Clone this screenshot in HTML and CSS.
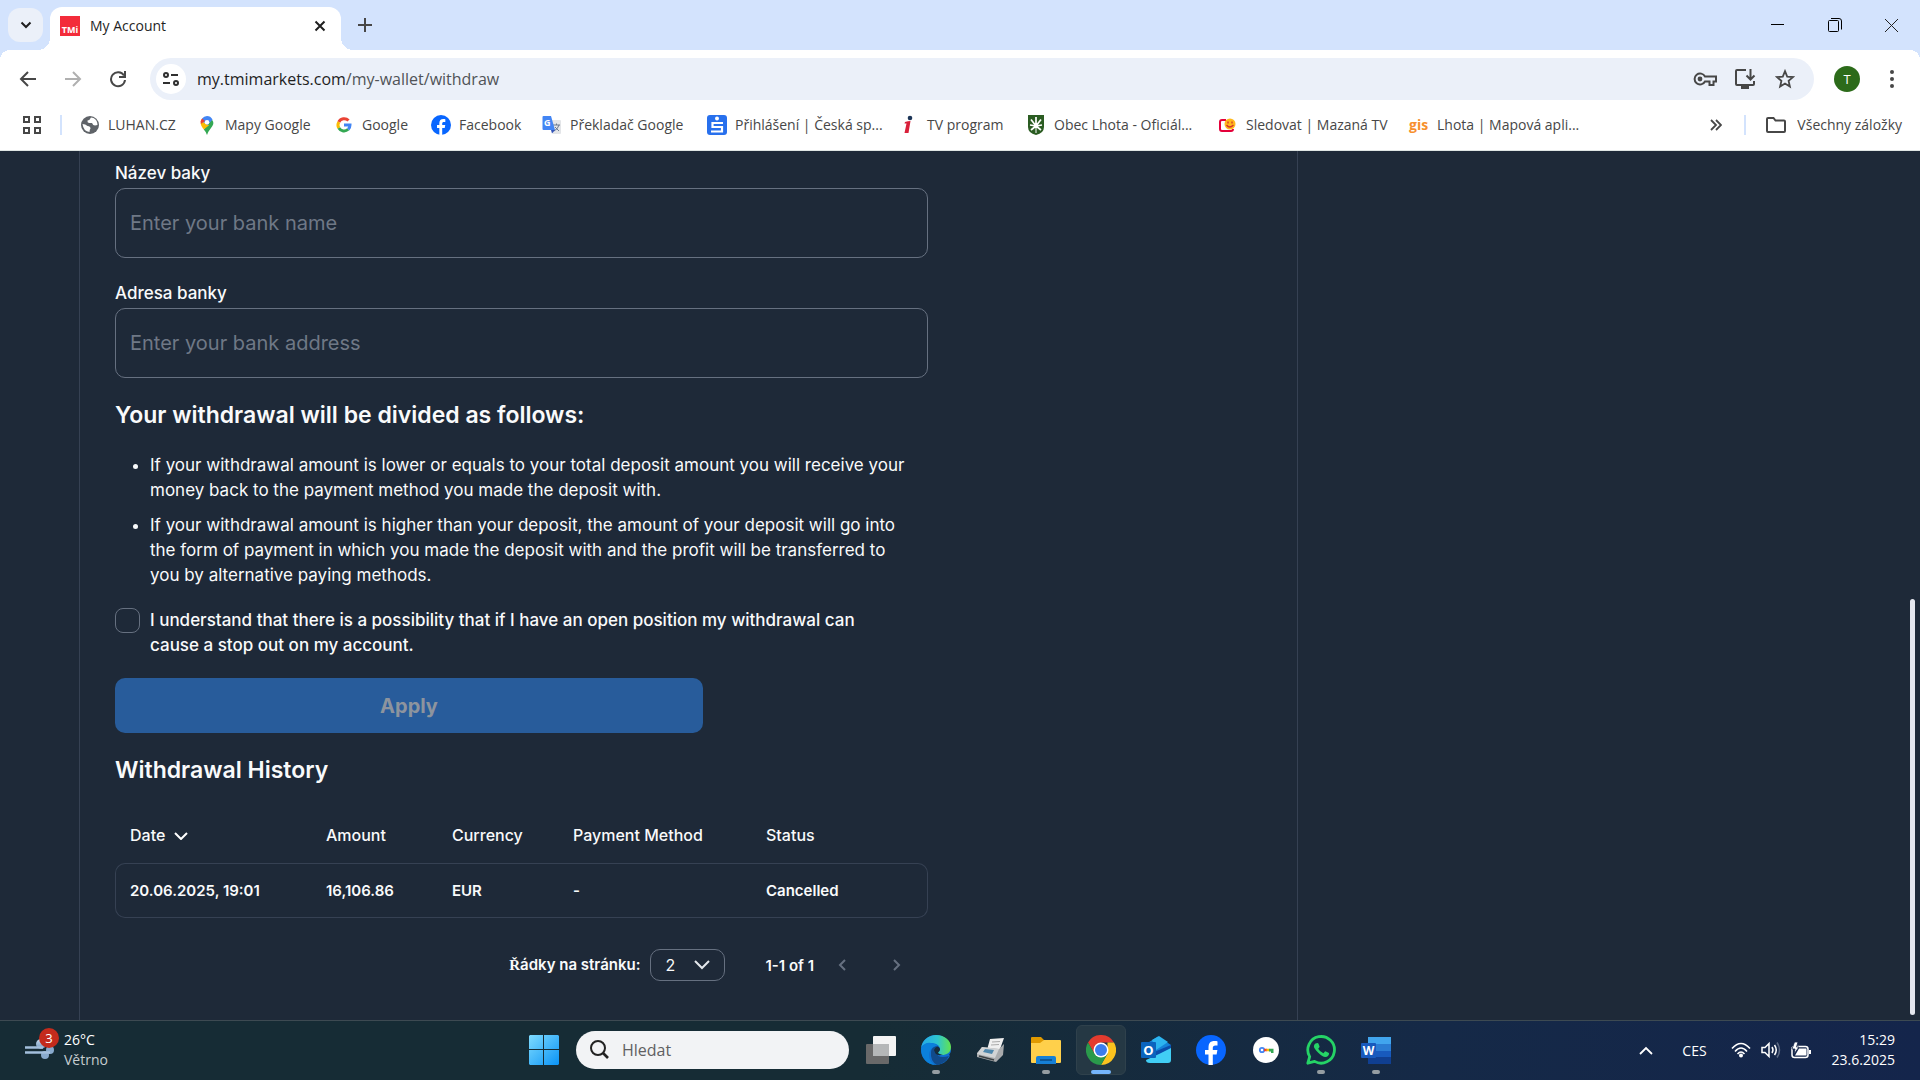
FILE: index.html
```html
<!DOCTYPE html>
<html lang="cs">
<head>
  <meta charset="UTF-8">
  <meta name="viewport" content="width=device-width, initial-scale=1.0">
  <title>My Account</title>
  <link rel="stylesheet" href="styles.css">
</head>
<body>

  <!-- Tab strip -->
  <header class="tab-strip">
    <button class="tab-search" aria-label="Hledat karty">
      <svg width="12" height="12" viewBox="0 0 12 12"><path d="M1.500 3.500L6 8l4.500-4.500" fill="none" stroke="#1f1f1f" stroke-width="2"/></svg>
    </button>
    <div class="tab">
      <span class="tab-icon">TMi</span>
      <span class="tab-title">My Account</span>
      <button class="tab-close" aria-label="Zavřít kartu">
        <svg width="12" height="12" viewBox="0 0 12 12"><path d="M1.500 1.500l9 9M10.500 1.500l-9 9" stroke="#1f1f1f" stroke-width="2"/></svg>
      </button>
    </div>
    <button class="new-tab" aria-label="Nová karta">
      <svg width="14" height="14" viewBox="0 0 14 14"><path d="M7 0v14M0 7h14" stroke="#474747" stroke-width="2"/></svg>
    </button>
    <div class="window-controls">
      <button aria-label="Minimalizovat"><svg width="13" height="13" viewBox="0 0 13 13"><path d="M0 5.500h13" stroke="#000"/></svg></button>
      <button aria-label="Obnovit"><svg width="14" height="14" viewBox="0 0 14 14"><g fill="none" stroke="#000"><rect x=".5" y="2.500" width="10" height="11" rx="1"/><path d="M3 .5h8q2.500 0 2.500 2.500v8.500"/></g></svg></button>
      <button aria-label="Zavřít"><svg width="13" height="13" viewBox="0 0 13 13"><path d="M0 0l13 13M13 0L0 13" stroke="#222"/></svg></button>
    </div>
  </header>

  <!-- Address bar -->
  <div class="toolbar">
    <button class="tool-button" aria-label="Zpět">
      <svg width="18" height="18" viewBox="0 0 18 18"><path d="M17 9H2M9 2L2 9l7 7" fill="none" stroke="#474747" stroke-width="2"/></svg>
    </button>
    <button class="tool-button" aria-label="Vpřed" disabled>
      <svg width="18" height="18" viewBox="0 0 18 18"><path d="M1 9h15M9 2l7 7-7 7" fill="none" stroke="#b0b0b0" stroke-width="2"/></svg>
    </button>
    <button class="tool-button" aria-label="Načíst znovu">
      <svg width="18" height="18" viewBox="0 0 18 18"><path d="M15 5.500A7 7 0 1 0 16 10M16 1v6h-6" fill="none" stroke="#474747" stroke-width="2"/></svg>
    </button>
    <div class="omnibox">
      <button class="site-info" aria-label="Informace o webu">
        <svg width="18" height="16" viewBox="0 0 18 16"><g fill="none" stroke="#303030" stroke-width="2"><circle cx="4" cy="4" r="2"/><path d="M9 4h7M1 12h7"/><circle cx="14" cy="12" r="2"/></g></svg>
      </button>
      <div class="url">my.tmimarkets.com<span class="url-path">/my-wallet/withdraw</span></div>
      <button class="omni-action" aria-label="Hesla">
        <svg width="24" height="16" viewBox="0 0 24 16"><path d="M12 5.500A5.500 5.500 0 1 0 12 10.500h4.500v3.500h4v-3.500H23v-5z" fill="none" stroke="#474747" stroke-width="2"/><circle cx="7" cy="8" r="2.400" fill="#474747"/></svg>
      </button>
      <button class="omni-action" aria-label="Nainstalovat">
        <svg width="22" height="22" viewBox="0 0 22 22"><path d="M12 2H3q-1 0-1 1v13q0 1 1 1h16q1 0 1-1v-3" fill="none" stroke="#474747" stroke-width="2"/><path d="M16.500 1v10M12.500 7.500l4 4 4-4" fill="none" stroke="#474747" stroke-width="2"/><path d="M7 17h8v4H7z" fill="#474747"/></svg>
      </button>
      <button class="omni-action" aria-label="Přidat záložku">
        <svg width="20" height="20" viewBox="0 0 20 20"><path d="M10 2.200l2.200 5.400 5.800.5-4.400 3.800 1.300 5.700-4.900-3-4.900 3 1.300-5.700L2 8.100l5.800-.5z" fill="none" stroke="#474747" stroke-width="1.800"/></svg>
      </button>
    </div>
    <button class="profile" aria-label="Profil">T</button>
    <button class="menu" aria-label="Nabídka">
      <svg width="4" height="18" viewBox="0 0 4 18"><g fill="#474747"><circle cx="2" cy="2" r="2"/><circle cx="2" cy="9" r="2"/><circle cx="2" cy="16" r="2"/></g></svg>
    </button>
  </div>

  <!-- Bookmarks -->
  <nav class="bookmarks">
    <button class="apps" aria-label="Aplikace">
      <svg width="18" height="18" viewBox="0 0 18 18"><path d="M1 1h5v5H1zM12 1h5v5h-5zM1 12h5v5H1zM12 12h5v5h-5z" fill="none" stroke="#474747" stroke-width="2"/></svg>
    </button>
    <span class="divider"></span>
    <div class="bookmark-list">
      <a href="#" class="bookmark">
        <svg width="20" height="20" viewBox="0 0 20 20"><circle cx="10" cy="10" r="9" fill="#5f6368"/><path d="M11 2.500q-1 2.500-3.500 3-.5 2 1.500 2.500h3q1 2.500 3 2.500l2.500-.5q0-5-4-7zM2.500 9q3 0 5 2 3 0 3 2.500-1 1-1 3.500-6-.5-7-8z" fill="#fff"/></svg>
        <span>LUHAN.CZ</span>
      </a>
      <a href="#" class="bookmark">
        <svg width="20" height="20" viewBox="0 0 20 20"><path d="M10 20q-.8-3-3.200-5.600L14.800 4.200Q16.800 7 16.300 9q-.6 2.200-3 5Q10.800 17 10 20z" fill="#34a853"/><path d="M6.800 14.400Q3.500 10.500 3.600 7.500L8 7l4 3.300z" fill="#fbbc04"/><path d="M3.600 7.500q0-2 1.500-4L9 6.500z" fill="#ea4335"/><path d="M5.100 3.500Q7 1 10 1q3.500 0 5.500 3.400L10.500 10 6 7z" fill="#4285f4"/><path d="M5.100 3.500L8 6 3.900 9q-.8-3 1.200-5.500z" fill="#ea4335"/><circle cx="10" cy="7.300" r="2.300" fill="#fff"/></svg>
        <span>Mapy Google</span>
      </a>
      <a href="#" class="bookmark">
        <svg width="20" height="20" viewBox="0 0 20 20"><g fill="none" stroke-width="3"><path d="M14.500 5.500A6 6 0 0 0 4.800 7" stroke="#ea4335"/><path d="M4.800 7a6 6 0 0 0 0 6" stroke="#fbbc04"/><path d="M4.800 13a6 6 0 0 0 9.400 1.300" stroke="#34a853"/><path d="M10 10h6q0 2.600-1.800 4.400" stroke="#4285f4"/></g></svg>
        <span>Google</span>
      </a>
      <a href="#" class="bookmark">
        <svg width="20" height="20" viewBox="0 0 30 30"><circle cx="15" cy="15" r="15" fill="#0866ff"/><path d="M12.500 30V19.500H9V15h3.500v-2.500c0-4.500 2-6.500 6-6.500 1.500 0 2.500.2 3 .4v4h-2c-2 0-2.700.8-2.700 2.600v2h4.600l-.8 4.500h-3.800V30z" fill="#fff"/></svg>
        <span>Facebook</span>
      </a>
      <a href="#" class="bookmark">
        <svg width="20" height="20" viewBox="0 0 20 20"><path d="M8 5h10q1 0 1 1v12q0 1-1 1h-7z" fill="#e3e5e8"/><path d="M11 10h7M14.500 8.500V10M12 16q4-2 5-6M13 12l4 4" fill="none" stroke="#6b7a90"/><path d="M1.500 1H9l4 14H1.500q-1 0-1-1V2q0-1 1-1z" fill="#4285f4"/><path d="M9 15h4l-3 3.500z" fill="#3254b8"/><text x="2" y="11" class="glyph" font-size="9" fill="#fff">G</text></svg>
        <span>Překladač Google</span>
      </a>
      <a href="#" class="bookmark">
        <svg width="20" height="20" viewBox="0 0 20 20"><rect width="20" height="20" rx="3" fill="#2870ed"/><circle cx="10" cy="3.500" r="2" fill="#fff"/><path d="M16 8H5.500v4H15v4.500H4" fill="none" stroke="#fff" stroke-width="2.200"/></svg>
        <span>Přihlášení | Česká sp...</span>
      </a>
      <a href="#" class="bookmark">
        <svg width="20" height="20" viewBox="0 0 20 20"><circle cx="11" cy="3" r="2.300" fill="#1c3557"/><path d="M6 7q3-1 5.500-1L9.500 18H5.500L7.500 8.500H5.500z" fill="#d9203a"/></svg>
        <span>TV program</span>
      </a>
      <a href="#" class="bookmark">
        <svg width="20" height="20" viewBox="0 0 20 20"><path d="M2 0h16v12q0 6-8 8-8-2-8-8z" fill="#2b5c22"/><path d="M10 11V2M10 11L5 4.500M10 11l5-6.500M10 11L4 10M10 11l6-1M10 11l-5 4M10 11l5 4" stroke="#fff" stroke-width="1.700"/><path d="M10 12v6" stroke="#fff"/></svg>
        <span>Obec Lhota - Oficiál...</span>
      </a>
      <a href="#" class="bookmark">
        <svg width="20" height="20" viewBox="0 0 20 20"><path d="M8 5H4Q2 5 2 7v7q0 2 2 2h9q2 0 2-2" fill="none" stroke="#e4003a" stroke-width="2"/><circle cx="12" cy="9" r="5.500" fill="#ffb81c"/><path d="M8.500 10q3 4 7 0M10 6.500v2M14 6.500v2" fill="none" stroke="#d4342b" stroke-width="1.300"/></svg>
        <span>Sledovat | Mazaná TV</span>
      </a>
      <a href="#" class="bookmark">
        <span class="gis-icon">gis</span>
        <span>Lhota | Mapová apli...</span>
      </a>
    </div>
    <button class="more-bookmarks" aria-label="Další záložky">
      <svg width="12" height="12" viewBox="0 0 12 12"><path d="M1 1l5 5-5 5M6 1l5 5-5 5" fill="none" stroke="#474747" stroke-width="1.800"/></svg>
    </button>
    <span class="divider"></span>
    <a href="#" class="bookmark all-bookmarks">
      <svg width="20" height="16" viewBox="0 0 20 16"><path d="M2 1h5.500l2 2.500H18q1 0 1 1V14q0 1-1 1H2q-1 0-1-1V2q0-1 1-1z" fill="none" stroke="#474747" stroke-width="2"/></svg>
      <span>Všechny záložky</span>
    </a>
  </nav>

  <!-- Withdraw page -->
  <main class="page">
    <section class="panel">
      <form class="withdraw-form">
        <div class="field">
          <label for="bank-name">Název baky</label>
          <input type="text" id="bank-name" placeholder="Enter your bank name">
        </div>
        <div class="field">
          <label for="bank-address">Adresa banky</label>
          <input type="text" id="bank-address" placeholder="Enter your bank address">
        </div>

        <h2>Your withdrawal will be divided as follows:</h2>
        <ul class="rules">
          <li>If your withdrawal amount is lower or equals to your total deposit amount you will receive your money back to the payment method you made the deposit with.</li>
          <li>If your withdrawal amount is higher than your deposit, the amount of your deposit will go into the form of payment in which you made the deposit with and the profit will be transferred to you by alternative paying methods.</li>
        </ul>

        <div class="consent">
          <input type="checkbox" id="consent">
          <label for="consent">I understand that there is a possibility that if I have an open position my withdrawal can cause a stop out on my account.</label>
        </div>
        <button type="submit" class="apply" disabled>Apply</button>

        <h2>Withdrawal History</h2>
        <table class="history">
          <thead>
            <tr>
              <th class="col-date">Date
                <svg width="14" height="8" viewBox="0 0 14 8"><path d="M1 1l6 6 6-6" fill="none" stroke="#fff" stroke-width="2"/></svg>
              </th>
              <th class="col-amount">Amount</th>
              <th class="col-currency">Currency</th>
              <th class="col-method">Payment Method</th>
              <th>Status</th>
            </tr>
          </thead>
          <tbody>
            <tr>
              <td>20.06.2025, 19:01</td>
              <td>16,106.86</td>
              <td>EUR</td>
              <td>-</td>
              <td>Cancelled</td>
            </tr>
          </tbody>
        </table>

        <div class="pagination">
          <label for="rows"><span class="serif">Ř</span>ádky na stránku:</label>
          <div class="select-wrap">
            <select id="rows">
              <option>2</option>
              <option>5</option>
              <option>10</option>
            </select>
            <svg width="16" height="10" viewBox="0 0 16 10"><path d="M1 1l7 7 7-7" fill="none" stroke="#e4e7ec" stroke-width="2"/></svg>
          </div>
          <span class="range">1-1 of 1</span>
          <button type="button" class="pager" aria-label="Předchozí" disabled>
            <svg width="8" height="12" viewBox="0 0 8 12"><path d="M7 1L2 6l5 5" fill="none" stroke="#667080" stroke-width="2"/></svg>
          </button>
          <button type="button" class="pager" aria-label="Další" disabled>
            <svg width="8" height="12" viewBox="0 0 8 12"><path d="M1 1l5 5-5 5" fill="none" stroke="#667080" stroke-width="2"/></svg>
          </button>
        </div>
      </form>
    </section>
    <div class="scroll-track"><div class="scroll-thumb"></div></div>
  </main>

  <!-- Taskbar -->
  <footer class="taskbar">
    <button class="weather">
      <span class="weather-icon">
        <svg width="30" height="30" viewBox="0 0 30 30"><defs><linearGradient id="wind" x1="0" y1="0" x2="0" y2="1"><stop offset="0" stop-color="#c9dcf0"/><stop offset="1" stop-color="#6f97bd"/></linearGradient></defs><circle cx="16" cy="9" r="5" fill="url(#wind)"/><circle cx="25" cy="15" r="4" fill="#88aacd"/><circle cx="20" cy="20" r="4" fill="#88aacd"/><path d="M0 12.500h18M0 17.500h25" stroke="#a3bfdc" stroke-width="2.500"/></svg>
        <span class="badge">3</span>
      </span>
      <span class="weather-text">26°C<span class="weather-state">Větrno</span></span>
    </button>

    <div class="task-center">
      <button class="task-button" aria-label="Start">
        <svg width="30" height="30" viewBox="0 0 30 30"><defs><linearGradient id="win" x1="0" y1="0" x2="1" y2="1"><stop offset="0" stop-color="#7fdcff"/><stop offset="1" stop-color="#0a93f5"/></linearGradient></defs><path d="M1 0h13v14H0V1zM15 0h14l1 1v13H15zM0 15h14v15H1l-1-1zM15 15h15v14l-1 1H15z" fill="url(#win)"/></svg>
      </button>
      <div class="search">
        <svg width="20" height="20" viewBox="0 0 20 20"><circle cx="8" cy="8" r="7" fill="none" stroke="#222" stroke-width="2"/><path d="M13 13l5 5" stroke="#222" stroke-width="2.600"/></svg>
        <input type="text" placeholder="Hledat" aria-label="Hledat">
      </div>
      <button class="task-button" aria-label="Zobrazení úloh">
        <svg width="30" height="28" viewBox="0 0 30 28"><rect y="8" width="23" height="20" rx="1" fill="#696969"/><rect x="7" width="23" height="20" rx="1" fill="#f4f4f4"/><path d="M7 8h16v12H7z" fill="#b5b7b8"/></svg>
      </button>
      <button class="task-button running" aria-label="Edge">
        <svg width="30" height="30" viewBox="0 0 30 30"><defs><linearGradient id="edge-top" x1="0" y1="0" x2="1" y2="0"><stop offset="0" stop-color="#25a8ea"/><stop offset=".55" stop-color="#2ec5cf"/><stop offset="1" stop-color="#62e34e"/></linearGradient></defs><circle cx="15" cy="15" r="15" fill="#0f6fd0"/><path d="M28 20l4-6v9z" fill="#152b38"/><path d="M0 13C1 5 8 0 15 0c9 0 15 6 15 12 0 6-5 8-9 8-3 0-4-1-4-2 0-1 2-1 2-4 0-4-5-6-9-6-5 0-9 2-10 5z" fill="url(#edge-top)"/><path d="M10 17c0-3 2-5 5-6l3 1q1 2 0 4l-2 2c0 4 5 5 12 3q-4 8-12 9Q9 26 10 17z" fill="#114a8b"/><path d="M0 13q4-6 10-5 4 0 6 3c-5 0-8 5-8 9 0 5 3 9 7 10C6 30 0 23 0 13z" fill="#0b80dc"/><path d="M13 15q1-3 3.500-3.500 3 1.500 2.500 3.500-1.500 2-2 2.500 1 2 5 2-5 2-7.500-1z" fill="#172c3b"/></svg>
      </button>
      <button class="task-button" aria-label="Tiskárna">
        <svg width="30" height="26" viewBox="0 0 30 26"><path d="M14 2l14-1-5 14-12-2z" fill="#f0f0f0"/><path d="M6 10l17 2 5-5-1 11-7 7L1 20v-4z" fill="#a9abad"/><path d="M6 10l17 2-4 9-18-4z" fill="#d2d4d5"/><path d="M9 12l9 1-2 4-9-2z" fill="#4f87ac"/><path d="M3 19l15 4" stroke="#3c4144" stroke-width="1.500"/><path d="M16 5l8-.5M15 8l8-.5" stroke="#aaa"/></svg>
      </button>
      <button class="task-button running" aria-label="Průzkumník">
        <svg width="30" height="27" viewBox="0 0 30 27"><path d="M0 1q0-1 1-1h9l3 3h10v8H0z" fill="#e09a00"/><path d="M0 6h9l4-3h16q1 0 1 1v21q0 1-1 1H1q-1 0-1-1z" fill="#ffd04b"/><path d="M5 27v-6q0-2 2-2h16q2 0 2 2v6z" fill="#1680d6"/><path d="M9 23h12" stroke="#0d5798" stroke-width="2"/></svg>
      </button>
      <button class="task-button running active" aria-label="Chrome">
        <svg width="30" height="30" viewBox="0 0 30 30"><path d="M2 7.500A15 15 0 0 1 28 7.500H15L8.500 18.800z" fill="#e33b2e"/><path d="M28 7.500A15 15 0 0 1 15 30l6.500-11.200V7.500z" fill="#fcc31e"/><path d="M2 7.500A15 15 0 0 0 15 30l6.500-11.200h-13z" fill="#2a9a4b"/><circle cx="15" cy="15" r="7.500" fill="#fff"/><circle cx="15" cy="15" r="6" fill="#3b7ded"/></svg>
      </button>
      <button class="task-button" aria-label="Outlook">
        <svg width="30" height="28" viewBox="0 0 30 28"><path d="M5 8L16 1q1-1 2 0l12 8v13H5z" fill="#1482d8"/><path d="M11 4l7-4 9 6-12 8z" fill="#2cb4ef"/><path d="M13 16L30 9v9l-14 5z" fill="#0a4dab"/><path d="M30 12v12q0 3-3 3H9q-4 0-4-3l13-6z" fill="#41cef5"/><rect y="6" width="15" height="16" rx="1" fill="#0a64be"/><text x="7.500" y="19" class="glyph" text-anchor="middle" font-size="13" fill="#fff">O</text></svg>
      </button>
      <button class="task-button" aria-label="Facebook">
        <svg width="30" height="30" viewBox="0 0 30 30"><circle cx="15" cy="15" r="15" fill="#0866ff"/><path d="M12.500 30V19.500H9V15h3.500v-2.500c0-4.500 2-6.500 6-6.500 1.500 0 2.500.2 3 .4v4h-2c-2 0-2.700.8-2.700 2.600v2h4.600l-.8 4.500h-3.800V30z" fill="#fff"/></svg>
      </button>
      <button class="task-button" aria-label="Správce hesel">
        <svg width="26" height="26" viewBox="0 0 26 26"><circle cx="13" cy="13" r="13" fill="#fff"/><circle cx="9" cy="13" r="2.200" fill="none" stroke="#4285f4" stroke-width="1.800"/><path d="M11 13h3" stroke="#ea4335" stroke-width="2.500"/><path d="M13.500 13h3" stroke="#fbbc04" stroke-width="2.500"/><path d="M16 11.700h4.500V16H18v-1.500h-2z" fill="#34a853"/></svg>
      </button>
      <button class="task-button running" aria-label="WhatsApp">
        <svg width="30" height="30" viewBox="0 0 30 30"><path d="M1.800 28.200l1.900-6.600A13.300 13.300 0 1 1 8.600 26.400z" fill="none" stroke="#25d366" stroke-width="2.800" stroke-linejoin="round"/><path d="M9.500 8.500l2-.6q.8 0 1 .8l1 2.500q.2.600-.3 1.200l-1 1.300q1.800 3.200 5.200 4.600l1.500-1.700q.4-.4 1-.2l2.600 1.300q.7.400.6 1-.5 3-3.600 3.300Q17 22.300 12.500 18 7.500 13 7.900 11q.3-1.700 1.600-2.500z" fill="#25d366"/></svg>
      </button>
      <button class="task-button running" aria-label="Word">
        <svg width="30" height="27" viewBox="0 0 30 27"><path d="M7 0h23v7H7z" fill="#41a5ee"/><path d="M7 7h23v7H7z" fill="#2b7cd3"/><path d="M7 14h23v6H7z" fill="#185abd"/><path d="M7 20h23v7H7z" fill="#103f91"/><rect y="6" width="15" height="15" rx="1" fill="#185abd"/><text x="7.500" y="18" class="glyph" text-anchor="middle" font-size="12" fill="#fff">W</text></svg>
      </button>
    </div>

    <div class="tray">
      <button class="tray-more" aria-label="Skryté ikony">
        <svg width="14" height="9" viewBox="0 0 14 9"><path d="M1 8l6-6 6 6" fill="none" stroke="#fff" stroke-width="1.800"/></svg>
      </button>
      <button class="language">CES</button>
      <button class="status-icons" aria-label="Síť, zvuk a baterie">
        <svg width="20" height="16" viewBox="0 0 20 16"><path d="M1 6.500q9-10 18 0M4 9.500q6-7 12 0M6.500 12q3.500-4 7 0" fill="none" stroke="#fff" stroke-width="1.600"/><circle cx="10" cy="13.500" r="2" fill="#fff"/></svg>
        <svg width="20" height="18" viewBox="0 0 20 18"><g fill="none" stroke="#fff" stroke-width="1.500"><path d="M1 6.500h3l4-4v13l-4-4H1zM11 6q2 3 0 6M13.500 4q3.500 5 0 10"/><path d="M16 1.500q5 7.500 0 15" stroke="#5a6883"/></g></svg>
        <svg width="20" height="17" viewBox="0 0 20 17"><rect x="1" y="4.500" width="16" height="11" rx="2.500" fill="none" stroke="#fff" stroke-width="1.500"/><path d="M4 13.500l4-7h7.500v7zM18 8h2v4h-2z" fill="#fff"/><path d="M3.500 0L1 7h3l-1 5 5-7H5.500L7 0z" fill="#fff" stroke="#15264a" stroke-width=".8"/></svg>
      </button>
      <button class="clock">15:29<br>23.6.2025</button>
    </div>
  </footer>

</body>
</html>
```

FILE: styles.css
```css
:root {
  --strip: #d3e3fd;
  --omnibox: #ebf0f9;
  --icon: #474747;
  --page-bg: #1e2938;
  --line: #364153;
  --field-line: #667080;
  --text: #f9fafb;
  --muted: #6f7886;
  --primary: #285c9b;
  --ui-font: 'Open Sans', 'Noto Sans', sans-serif;
}

* {
  box-sizing: border-box;
}

body {
  margin: 0;
  height: 100vh;
  display: flex;
  flex-direction: column;
  font-family: var(--ui-font);
  font-size: 14px;
  background-color: var(--page-bg);
  overflow: hidden;
}

button {
  display: flex;
  align-items: center;
  justify-content: center;
  padding: 0;
  border: none;
  background: none;
  font-family: inherit;
  color: inherit;
}

svg {
  display: block;
  flex-shrink: 0;
}

.glyph {
  font-family: var(--ui-font);
  font-weight: 700;
}

/* Tab strip */
.tab-strip {
  display: flex;
  align-items: center;
  height: 50px;
  padding-left: 8px;
  background-color: var(--strip);
  flex-shrink: 0;
}

.tab-search {
  width: 35px;
  height: 34px;
  border-radius: 12px;
  background-color: var(--omnibox);
}

.tab {
  position: relative;
  display: flex;
  align-items: center;
  align-self: flex-end;
  width: 291px;
  height: 43px;
  margin-left: 7px;
  padding: 0 15px 6px 10px;
  gap: 10px;
  background-color: #ffffff;
  border-radius: 12px 12px 0 0;
  color: #1f1f1f;
}

/* outward curves at the foot of the tab */
.tab::before,
.tab::after {
  content: '';
  position: absolute;
  bottom: 0;
  width: 12px;
  height: 12px;
}

.tab::before {
  left: -12px;
  background: radial-gradient(circle at 0 0, transparent 12px, #ffffff 12px);
}

.tab::after {
  right: -12px;
  background: radial-gradient(circle at 100% 0, transparent 12px, #ffffff 12px);
}

.tab-icon {
  width: 20px;
  height: 20px;
  padding-top: 8px;
  background-color: #f32c3a;
  color: #ffffff;
  font-size: 9px;
  font-weight: 700;
  line-height: 12px;
  text-align: center;
}

.tab-title {
  flex: 1;
}

.new-tab {
  width: 34px;
  height: 34px;
  margin-left: 7px;
}

.window-controls {
  display: flex;
  margin-left: auto;
}

.window-controls button {
  width: 57px;
  height: 48px;
}

/* Toolbar */
.toolbar {
  display: flex;
  align-items: center;
  height: 57px;
  padding: 0 8px 0 5px;
  background:
    radial-gradient(circle at 10px 10px, #ffffff 10px, var(--strip) 10px) 0 0 / 10px 10px no-repeat,
    radial-gradient(circle at 0 10px, #ffffff 10px, var(--strip) 10px) 100% 0 / 10px 10px no-repeat,
    #ffffff;
  flex-shrink: 0;
}

.tool-button {
  width: 45px;
  height: 40px;
}

.omnibox {
  flex: 1;
  display: flex;
  align-items: center;
  height: 42px;
  margin-left: 10px;
  padding: 0 9px 0 6px;
  border-radius: 21px;
  background-color: var(--omnibox);
}

.site-info {
  width: 30px;
  height: 30px;
  border-radius: 50%;
  background-color: #ffffff;
}

.url {
  flex: 1;
  margin-left: 11px;
  font-size: 16px;
  color: #1f1f1f;
}

.url-path {
  color: #505357;
}

.omni-action {
  width: 40px;
  height: 40px;
}

.profile {
  width: 26px;
  height: 26px;
  margin-left: 20px;
  border-radius: 50%;
  background-color: #2c6b1a;
  color: #ffffff;
  font-size: 13px;
}

.menu {
  width: 40px;
  height: 40px;
  margin-left: 12px;
}

/* Bookmarks */
.bookmarks {
  display: flex;
  align-items: center;
  height: 44px;
  padding: 0 18px 8px 12px;
  background-color: #ffffff;
  border-bottom: 1px solid #dfe5e3;
  flex-shrink: 0;
}

.apps {
  width: 40px;
  height: 30px;
}

.divider {
  width: 2px;
  height: 20px;
  margin-left: 8px;
  background-color: var(--strip);
}

.bookmark-list {
  flex: 1;
  display: grid;
  grid-template-columns: 117px 137px 97px 111px 165px 192px 127px 192px 191px auto;
  justify-content: start;
  margin-left: 18px;
}

.bookmark {
  display: flex;
  align-items: center;
  gap: 8px;
  line-height: 18px;
  color: var(--icon);
  text-decoration: none;
  white-space: nowrap;
}

.gis-icon {
  width: 20px;
  color: #f78f2d;
  font-size: 14px;
  font-weight: 700;
}

.more-bookmarks {
  width: 40px;
  height: 30px;
}

.all-bookmarks {
  gap: 11px;
  margin-left: 20px;
}

/* Page */
.page {
  flex: 1;
  min-height: 0;
  display: flex;
  background-color: var(--page-bg);
  color: var(--text);
  font-family: Inter, sans-serif;
}

.panel {
  width: 100%;
  max-width: 1219px;
  margin-left: 79px;
  padding: 7px 35px 0;
  border: solid var(--line);
  border-width: 0 1px;
}

.withdraw-form {
  display: flex;
  flex-direction: column;
  gap: 20px;
  max-width: 813px;
  font-size: 17px;
  line-height: 25px;
}

.field {
  display: flex;
  flex-direction: column;
}

.field label {
  line-height: 30px;
  font-weight: 500;
}

.field input {
  height: 70px;
  padding: 0 14px;
  border: 1px solid var(--field-line);
  border-radius: 10px;
  background: none;
  color: var(--text);
  font-family: inherit;
  font-size: 20px;
}

.field input::placeholder {
  color: var(--muted);
}

.withdraw-form h2 {
  margin: 0;
  font-size: 23px;
  line-height: 35px;
  font-weight: 600;
}

.rules {
  display: flex;
  flex-direction: column;
  gap: 10px;
  margin: 0;
  padding: 0 15px 0 35px;
}

.consent {
  display: flex;
  gap: 10px;
  padding-right: 40px;
  font-weight: 500;
}

.consent input {
  appearance: none;
  flex-shrink: 0;
  width: 25px;
  height: 25px;
  margin: 0;
  border: 1px solid var(--field-line);
  border-radius: 8px;
}

.apply {
  width: 100%;
  max-width: 588px;
  height: 55px;
  border-radius: 10px;
  background-color: var(--primary);
  color: #8d949e;
  font-size: 20px;
  font-weight: 700;
}

.history {
  width: 100%;
  table-layout: fixed;
  border-spacing: 0;
  font-size: 16px;
  text-align: left;
}

.history th {
  height: 55px;
  padding: 0 15px;
  font-weight: 500;
  white-space: nowrap;
}

.history th svg {
  display: inline-block;
  margin: 0 0 1px 4px;
}

.history td {
  height: 55px;
  padding: 0 15px;
  border: solid var(--line);
  border-width: 1px 0;
  font-size: 15px;
  font-weight: 600;
}

.history td:first-child {
  padding-left: 14px;
  border-left-width: 1px;
  border-radius: 10px 0 0 10px;
}

.history td:last-child {
  border-right-width: 1px;
  border-radius: 0 10px 10px 0;
}

.col-date {
  width: 196px;
}

.col-amount {
  width: 126px;
}

.col-currency {
  width: 121px;
}

.col-method {
  width: 193px;
}

.pagination {
  display: flex;
  align-items: center;
  justify-content: flex-end;
  margin-top: 11px;
  padding-right: 11px;
  font-size: 15px;
  font-weight: 600;
}

.serif {
  font-family: 'Liberation Serif', serif;
}

.select-wrap {
  display: grid;
  align-items: center;
  margin-left: 10px;
}

.select-wrap > * {
  grid-area: 1 / 1;
}

.select-wrap select {
  appearance: none;
  width: 75px;
  height: 32px;
  padding: 0 14px;
  border: 1px solid var(--field-line);
  border-radius: 10px;
  background: none;
  color: var(--text);
  font-family: inherit;
  font-size: 16px;
}

.select-wrap svg {
  justify-self: end;
  margin-right: 15px;
  pointer-events: none;
}

.range {
  margin: 0 8px 0 40px;
}

.pager {
  width: 40px;
  height: 32px;
}

.pager + .pager {
  margin-left: 15px;
}

/* Scrollbar */
.scroll-track {
  display: flex;
  flex-direction: column;
  justify-content: flex-end;
  margin-left: auto;
  padding: 5px;
}

.scroll-thumb {
  width: 5px;
  height: 48.4%;
  border-radius: 3px;
  background-color: #e4e6ee;
}

/* Taskbar */
.taskbar {
  display: grid;
  grid-template-columns: 1fr auto 1fr;
  align-items: center;
  height: 60px;
  padding-bottom: 1px;
  flex-shrink: 0;
  border-top: 1px solid #3d4a52;
  background: linear-gradient(90deg, #162c35 0%, #162c35 45%, #152947 75%, #14254b 100%);
  color: #ffffff;
}

.weather {
  justify-self: start;
  gap: 9px;
  padding-left: 25px;
  text-align: left;
}

.weather-icon {
  position: relative;
}

.badge {
  position: absolute;
  top: -7px;
  right: -4px;
  width: 20px;
  height: 20px;
  border-radius: 50%;
  background-color: #c42b1c;
  font-size: 13px;
  line-height: 20px;
  text-align: center;
}

.weather-text {
  font-size: 14px;
  line-height: 20px;
}

.weather-state {
  display: block;
  color: #c6cdd0;
}

.task-center {
  display: flex;
  align-items: center;
  gap: 5px;
}

.task-button {
  position: relative;
  width: 50px;
  height: 50px;
  border: 1px solid transparent;
  border-radius: 6px;
}

.task-button.running::after {
  content: '';
  position: absolute;
  bottom: 0;
  width: 8px;
  height: 4px;
  border-radius: 2px;
  background-color: #959da2;
}

.task-button.active {
  background-color: #253844;
  border-color: #2f414c;
}

.task-button.active::after {
  width: 20px;
  background-color: #75b5fc;
}

.search {
  display: flex;
  align-items: center;
  gap: 12px;
  width: 273px;
  height: 38px;
  margin: 0 2px;
  padding: 0 14px;
  border-radius: 19px;
  background-color: #f2f3f5;
}

.search input {
  flex: 1;
  min-width: 0;
  padding: 0;
  border: none;
  background: none;
  font-family: inherit;
  font-size: 16px;
}

.search input::placeholder {
  color: #5f6062;
}

.tray {
  display: flex;
  align-items: center;
  justify-self: end;
  padding-right: 25px;
}

.tray-more {
  width: 40px;
  height: 40px;
}

.language {
  margin-left: 16px;
  font-size: 14px;
}

.status-icons {
  gap: 10px;
  margin-left: 24px;
}

.clock {
  margin-left: 21px;
  font-size: 14px;
  line-height: 20px;
  text-align: right;
}
```
